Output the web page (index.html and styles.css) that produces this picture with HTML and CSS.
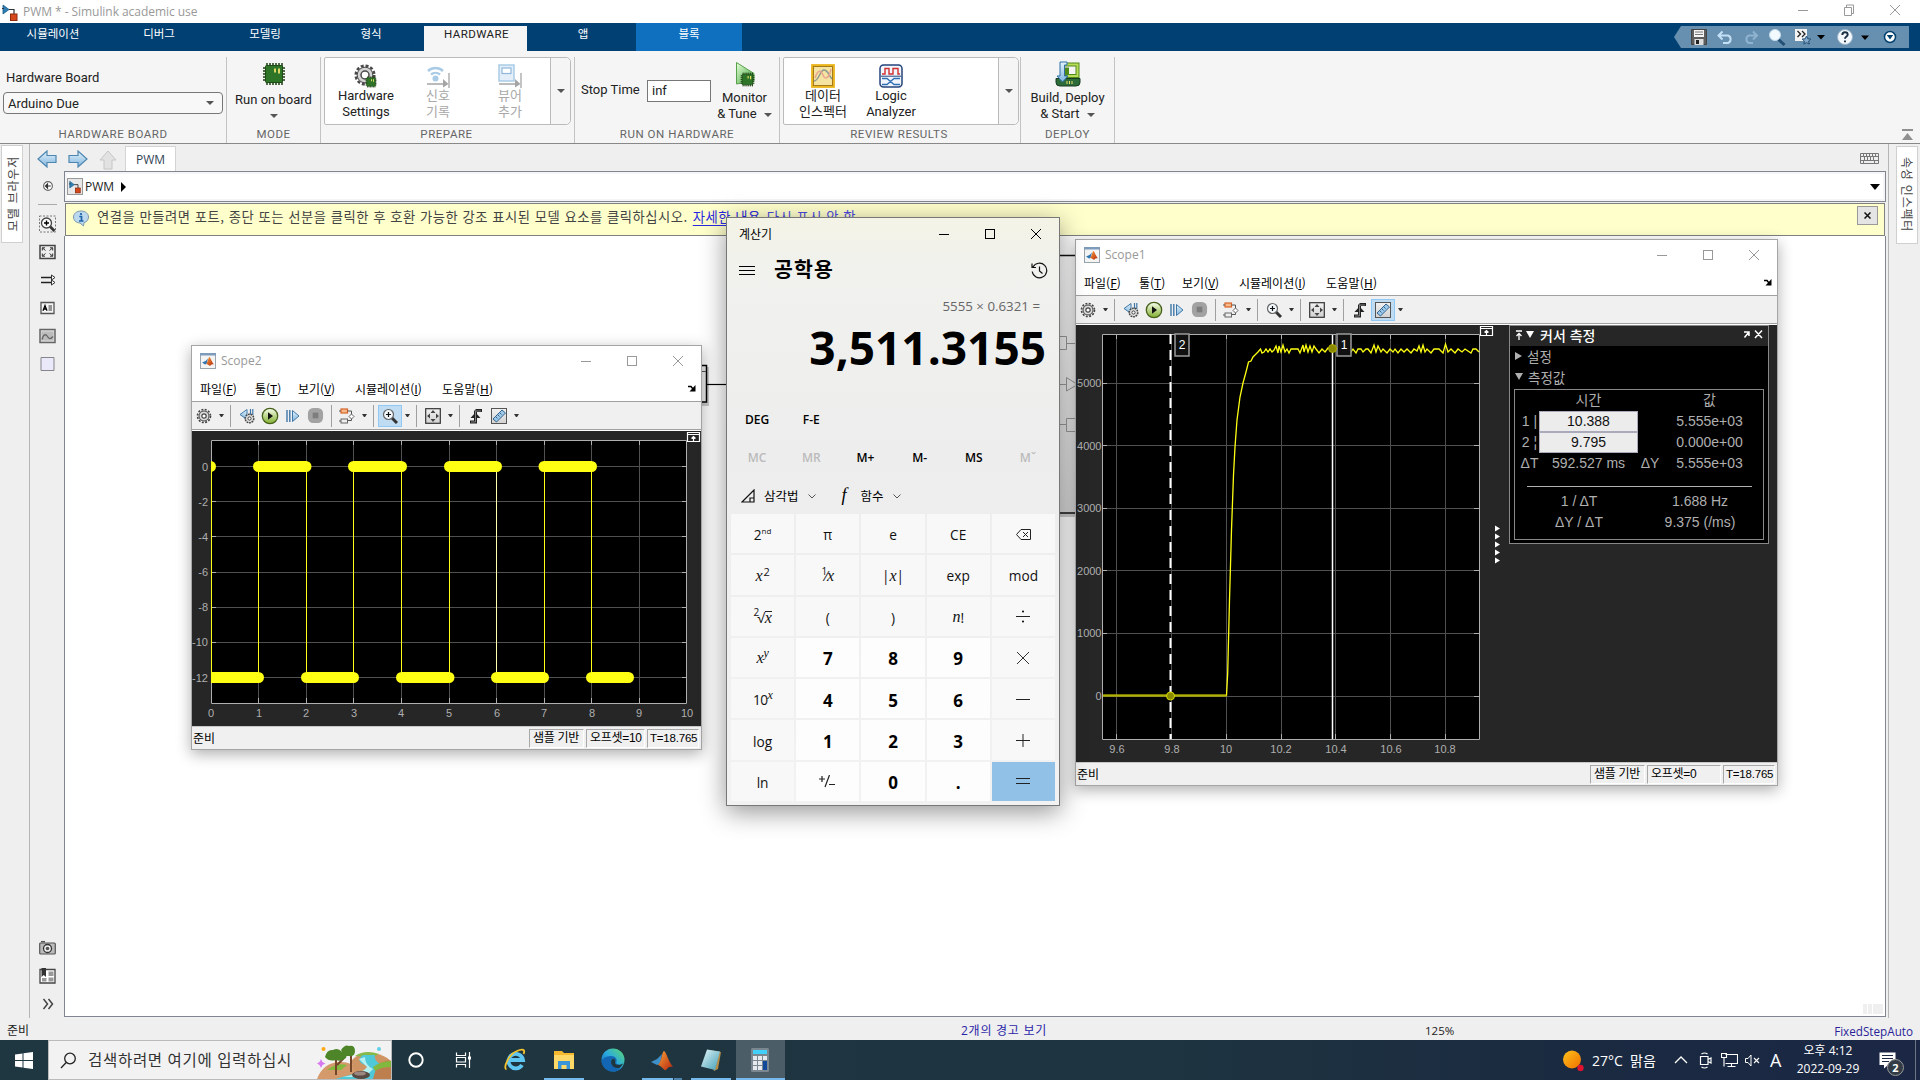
FILE: index.html
```html
<!DOCTYPE html>
<html lang="ko">
<head>
<meta charset="utf-8">
<title>PWM * - Simulink academic use</title>
<link rel="stylesheet" href="styles.css">
</head>
<body>
<svg class="sprite" width="0" height="0" aria-hidden="true">
  <defs>
    <linearGradient id="gBlue" x1="0" y1="0" x2="0" y2="1"><stop offset="0" stop-color="#e4f3fc"/><stop offset="1" stop-color="#7fb4dc"/></linearGradient>
    <linearGradient id="gGray" x1="0" y1="0" x2="0" y2="1"><stop offset="0" stop-color="#f2f2f2"/><stop offset="1" stop-color="#d2d2d2"/></linearGradient>
    <linearGradient id="gGreen" x1="0" y1="0" x2="0" y2="1"><stop offset="0" stop-color="#fafff0"/><stop offset="1" stop-color="#7fae2c"/></linearGradient>
    <linearGradient id="gLeaf" x1="0" y1="0" x2="1" y2="1"><stop offset="0" stop-color="#e4ffd8"/><stop offset="1" stop-color="#3fa33a"/></linearGradient>
    <linearGradient id="gSun" x1="0" y1="0" x2="1" y2="1"><stop offset="0" stop-color="#ffc21a"/><stop offset="1" stop-color="#f07000"/></linearGradient>
    <linearGradient id="gEdge" x1="0" y1="1" x2="1" y2="0"><stop offset="0" stop-color="#0c59a4"/><stop offset=".5" stop-color="#2aa8e0"/><stop offset="1" stop-color="#5fdc6c"/></linearGradient>
    <linearGradient id="gFire" x1="0" y1="0" x2="1" y2="1"><stop offset="0" stop-color="#f7a13a"/><stop offset="1" stop-color="#b5240c"/></linearGradient>
    <linearGradient id="gNote" x1="0" y1="0" x2="1" y2="1"><stop offset="0" stop-color="#e6f7fa"/><stop offset="1" stop-color="#3f9db5"/></linearGradient>
  </defs>
  <symbol id="i-model" viewBox="0 0 16 20"><path d="M1 3v9l6-4.500z" fill="#2d7fb5" stroke="#1a5a88" stroke-width=".8"/><path d="M0 6.500h2M7 7.500h5V12" fill="none" stroke="#333" stroke-width="1.200"/><rect x="8.500" y="12" width="6.500" height="6.500" fill="#d4481c" stroke="#8e2a0b"/></symbol>
  <symbol id="i-matlab" viewBox="0 0 16 16"><rect x=".5" y=".5" width="15" height="15" fill="#f4f4f4" stroke="#9aa4ad"/><rect x="0" y="0" width="16" height="2.500" fill="#7d9cbb"/><path d="M2 9.500l3.500-1.500L8 5.500 6.500 11 5 11.500z" fill="#2f77b5"/><path d="M6 11C8 9 8.500 4 9.300 4c1 0 2.500 5 4.700 7.500-1.500-.7-2.500-.3-3.500 1C9.500 13.500 8 11 6 11z" fill="url(#gFire)"/></symbol>
  <symbol id="i-chip" viewBox="0 0 24 24"><path d="M5 1v22M8 1v22M11 1v22M14 1v22M17 1v22M20 1v22M1 6h22M1 9h22M1 12h22M1 15h22M1 18h22" stroke="#1d3b12" stroke-width="1.500"/><rect x="3.500" y="3.500" width="17" height="17" rx="1" fill="#2f7527" stroke="#1d4c17"/><path d="M13 6.500v4M17 6.500v5" stroke="#efe36b" stroke-width="1.800"/></symbol>
  <symbol id="i-gear" viewBox="0 0 16 16"><circle cx="8" cy="8" r="6.500" fill="none" stroke="#444" stroke-width="1.600" stroke-dasharray="2 1.400"/><circle cx="8" cy="8" r="5" fill="#ddd" stroke="#444"/><circle cx="8" cy="8" r="2.200" fill="#fff" stroke="#444" stroke-width="1.200"/></symbol>
  <symbol id="i-signal" viewBox="0 0 24 24"><path d="M2 7a11 11 0 0 1 15 0M5 10.500a7 7 0 0 1 9 0" fill="none" stroke="#a9cbe6" stroke-width="2.400"/><circle cx="9.500" cy="14.500" r="3" fill="#a9cbe6"/><path d="M1 20h18M23 9v15" stroke="#a5a5a5" stroke-width="1.300"/><path d="M17 15l5.500 5-5.500 3.500z" fill="#a5a5a5"/></symbol>
  <symbol id="i-viewer" viewBox="0 0 24 24"><rect x="1" y="1" width="15" height="16" fill="#e4eef8" stroke="#a9cbe6" stroke-width="1.500"/><rect x="4" y="4" width="9" height="5.500" fill="#fff" stroke="#8fb8dc" stroke-width="1.200"/><path d="M1 20h18M23 9v15" stroke="#a5a5a5" stroke-width="1.300"/><path d="M17 15l5.500 5-5.500 3.500z" fill="#a5a5a5"/></symbol>
  <symbol id="i-step" viewBox="0 0 16 16"><path d="M2 2v12M4.800 2v12" stroke="#3f78a8" stroke-width="1.400"/><path d="M7.500 2.500v11L14 8z" fill="url(#gBlue)" stroke="#3f78a8"/></symbol>
  <symbol id="i-back" viewBox="0 0 16 16"><path d="M1 6.500L8 1.500v10z" fill="url(#gBlue)" stroke="#3f78a8"/><path d="M11.500 1v6M13.800 1v6" stroke="#3f78a8" stroke-width="1.200"/><circle cx="10.500" cy="10.500" r="4.300" fill="#ddd" stroke="#444" stroke-width="1.500" stroke-dasharray="1.800 .8"/><circle cx="10.500" cy="10.500" r="1.600" fill="#fff" stroke="#444"/></symbol>
  <symbol id="i-play" viewBox="0 0 18 18"><circle cx="9" cy="9" r="7.700" fill="url(#gGreen)" stroke="#47611d" stroke-width="1.300"/><path d="M7 5.300v7.400L12 9z" fill="#111"/></symbol>
  <symbol id="i-stop" viewBox="0 0 18 18"><rect x="1" y="1" width="16" height="16" rx="5.500" fill="#a2a2a2"/><rect x="6" y="6" width="6" height="6" fill="#7d7d7d"/></symbol>
  <symbol id="i-blocks" viewBox="0 0 16 16"><rect x="2" y="1" width="6.500" height="4" fill="#f6b98a" stroke="#d9642a" stroke-width="1.200"/><path d="M8.500 3h4V6M12.500 11v1.500H8.500" fill="none" stroke="#555"/><path d="M0 3h2M0 13h2" stroke="#555"/><path d="M12.500 6l2.500 2.500-2.500 2.500L10 8.500z" fill="#fff" stroke="#666"/><rect x="2" y="11" width="6.500" height="4" fill="#eee" stroke="#666"/></symbol>
  <symbol id="i-zoom" viewBox="0 0 16 16"><path d="M10 10l5 5" stroke="#333" stroke-width="3"/><circle cx="6.500" cy="6.500" r="5" fill="#f2f8fc" stroke="#666" stroke-width="1.200"/><path d="M4 6.500h5M6.500 4v5" stroke="#111" stroke-width="1.200"/></symbol>
  <symbol id="i-fit" viewBox="0 0 16 16"><rect x=".7" y=".7" width="14.600" height="14.600" fill="url(#gGray)" stroke="#333" stroke-width="1.200"/><path d="M8 2l2.500 3h-5zM8 14l2.500-3h-5zM2 8l3-2.500v5zM14 8l-3-2.500v5z" fill="#444"/></symbol>
  <symbol id="i-trigger" viewBox="0 0 16 16"><path d="M2 14h5.500V2.500M7.500 2.500H14" fill="none" stroke="#222" stroke-width="3"/><path d="M2.500 10L7.500 4.500l5 5.500z" fill="#222"/><path d="M3 14h4.500V3H13" fill="none" stroke="#999" stroke-width=".8"/></symbol>
  <symbol id="i-ruler" viewBox="0 0 16 16"><rect x=".5" y=".5" width="15" height="15" fill="url(#gGray)" stroke="#555"/><path d="M2 11L11 2l3.500 3L5.500 14z" fill="#9cc8ea" stroke="#34638c"/><path d="M5 9l1.500 1.500M7 7l1.500 1.500M9 5l1.500 1.500" stroke="#34638c"/></symbol>
  <symbol id="i-dock" viewBox="0 0 8 7"><path d="M0 1.500h3l2 2.500" fill="none" stroke="#000" stroke-width="1.500"/><path d="M7.500 0v6.500H1.500z" fill="#000"/></symbol>
  <symbol id="i-min" viewBox="0 0 12 12"><path d="M1 6.500h10" stroke="currentColor"/></symbol>
  <symbol id="i-max" viewBox="0 0 12 12"><rect x="1.500" y="1.500" width="9" height="9" fill="none" stroke="currentColor"/></symbol>
  <symbol id="i-close" viewBox="0 0 12 12"><path d="M1 1l10 10M11 1L1 11" stroke="currentColor"/></symbol>
  <symbol id="i-arrow" viewBox="0 0 20 18"><path d="M19 5.500v7H10V17L1 9l9-8v4.500z" fill="url(#gBlue)" stroke="#4d86b0" stroke-width="1.200"/></symbol>
</svg>

<div class="desktop">
  <header class="titlebar">
    <svg class="titlebar-icon" width="16" height="20"><use href="#i-model"/></svg>
    <span class="titlebar-text">PWM * - Simulink academic use</span>
    <div class="titlebar-buttons">
      <svg width="12" height="12"><use href="#i-min"/></svg>
      <svg width="12" height="12" viewBox="0 0 12 12"><path d="M1.500 3.500h7v8h-7zM3.500 3V1h7v8.500H9" fill="none" stroke="currentColor"/></svg>
      <svg width="12" height="12"><use href="#i-close"/></svg>
    </div>
  </header>

  <nav class="ribbon-tabs">
    <span class="rtab">시뮬레이션</span><span class="rtab">디버그</span><span class="rtab">모델링</span><span class="rtab">형식</span><span class="rtab rtab-active">HARDWARE</span><span class="rtab">앱</span><span class="rtab rtab-block">블록</span>
    <div class="quick">
      <svg width="235" height="22" viewBox="1674 26 235 22">
        <path d="M1681 26h228v22h-228l-7-11z" fill="#668fb0"/>
        <path d="M1691.500 29.500h15v15h-15z" fill="#5e5e5e" stroke="#444"/><path d="M1694 30h10v7h-10z" fill="#f4f4f4"/><path d="M1695 32h8M1695 34.500h8" stroke="#777"/><path d="M1694.500 39h9v6h-9z" fill="#ddd"/><path d="M1696 40h3v4h-3z" fill="#222"/>
        <path d="M1719 35.500h9a4 4 0 0 1 0 7.500h-5M1722.500 31.500l-4 4 4 4" fill="none" stroke="#c4e0f5" stroke-width="2"/>
        <path d="M1757 35.500h-8a4 4 0 0 0 0 7.500h4M1753 31.500l4 4-4 4" fill="none" stroke="#8fb3d0" stroke-width="2"/>
        <path d="M1778.500 39.500l6 5.500" stroke="#244f74" stroke-width="3"/><circle cx="1775" cy="35" r="5.500" fill="#f2fafe" stroke="#c4dced"/>
        <path d="M1795 29h12v12h-12z" fill="#f4f4f4"/><path d="M1797.500 31l3 3-3 3M1802 31l3 3-3 3" fill="none" stroke="#222" stroke-width="1.300"/><path d="M1806.500 36l1.300 2.800 3 .3-2.200 2 .7 3-2.800-1.500-2.700 1.500.6-3-2.200-2 3-.3z" fill="#86aacb" stroke="#244f74"/>
        <path d="M1817 35h8l-4 4.500zM1861 35.500h8l-4 4.500z" fill="#000"/>
        <circle cx="1845" cy="37" r="7.500" fill="#f4f8fb" stroke="#9ab6cc"/><path d="M1842.300 35q0-2.700 2.700-2.700t2.700 2.400c0 1.800-2.700 1.800-2.700 4M1845 40.500v1.800" fill="none" stroke="#1b2d40" stroke-width="1.900"/>
        <circle cx="1890" cy="37" r="5.500" fill="#fff" stroke="#00406f" stroke-width="1.500"/><path d="M1886.800 35h6.400l-3.200 4.500z" fill="#00406f"/>
      </svg>
    </div>
  </nav>

  <section class="ribbon">
    <div class="group g-board">
      <div class="group-body board-body"><label>Hardware Board</label><div class="select"><span>Arduino Due</span><i class="tri"></i></div></div>
      <div class="group-title">HARDWARE BOARD</div>
    </div>
    <div class="group g-mode">
      <div class="group-body"><div class="bigbtn"><svg width="24" height="24"><use href="#i-chip"/></svg><span>Run on board</span><i class="tri"></i></div></div>
      <div class="group-title">MODE</div>
    </div>
    <div class="group g-prepare">
      <div class="group-body"><div class="gallery">
        <div class="gitem"><svg width="24" height="24" viewBox="0 0 24 24"><circle cx="11" cy="11" r="9.300" fill="none" stroke="#4a4a4a" stroke-width="2.500" stroke-dasharray="3 1.900"/><circle cx="11" cy="11" r="7.800" fill="#d4d4d4" stroke="#4a4a4a"/><circle cx="11" cy="11" r="4" fill="#fff" stroke="#4a4a4a" stroke-width="1.500"/><svg x="11" y="12" width="12" height="12"><use href="#i-chip"/></svg></svg><span>Hardware<br>Settings</span></div>
        <div class="gitem gitem-off"><svg width="24" height="24"><use href="#i-signal"/></svg><span>신호<br>기록</span></div>
        <div class="gitem gitem-off"><svg width="24" height="24"><use href="#i-viewer"/></svg><span>뷰어<br>추가</span></div>
        <div class="gmore"><i class="tri"></i></div>
      </div></div>
      <div class="group-title">PREPARE</div>
    </div>
    <div class="group g-run">
      <div class="group-body run-body"><label>Stop Time</label><div class="input">inf</div>
        <div class="bigbtn tall"><svg width="24" height="26" viewBox="0 0 24 26"><path d="M3.500 1.500L21 12.500V20L3.500 23z" fill="url(#gLeaf)" stroke="#58a04c"/><svg x="7" y="11" width="15" height="15"><use href="#i-chip"/></svg></svg><span>Monitor<br>&amp; Tune <i class="tri"></i></span></div></div>
      <div class="group-title">RUN ON HARDWARE</div>
    </div>
    <div class="group g-review">
      <div class="group-body"><div class="gallery">
        <div class="gitem"><svg width="24" height="24" viewBox="0 0 24 24"><rect x="1.200" y="1.200" width="21.600" height="21.600" fill="#f5e3a2" stroke="#eab61e" stroke-width="2.200"/><rect x="2.500" y="2.500" width="19" height="19" fill="none" stroke="#a67a1a"/><path d="M3 17C8 17 9 6 13 6s5 6 8 9" fill="none" stroke="#8b9a8e" stroke-width="1.500"/><path d="M4 14c3-9 6-8 8-3s6 4 8-6" fill="none" stroke="#e8a690" stroke-width="1.500"/></svg><span>데이터<br>인스펙터</span></div>
        <div class="gitem"><svg width="24" height="24" viewBox="0 0 24 24"><rect x="1" y="1" width="22" height="22" rx="3.500" fill="#f2f6fc" stroke="#24447c" stroke-width="1.500"/><path d="M3 10h3V4.500h4V10h4V4.500h5V10h2" fill="none" stroke="#d03030" stroke-width="1.400"/><path d="M2 12.200h20" stroke="#24447c"/><path d="M3 14.500h5l7 6h6M3 20.500h5l7-6h6" fill="none" stroke="#2f6fb5" stroke-width="1.300"/></svg><span>Logic<br>Analyzer</span></div>
        <div class="gmore"><i class="tri"></i></div>
      </div></div>
      <div class="group-title">REVIEW RESULTS</div>
    </div>
    <div class="group g-deploy">
      <div class="group-body"><div class="bigbtn tall"><svg width="26" height="26" viewBox="0 0 26 26"><path d="M1 17.500h24v4q0 3.500-4 3.500H5q-4 0-4-3.500z" fill="#2e6b3a" stroke="#173d20"/><path d="M12 20v3M14.500 20v3M17 20v3" stroke="#efe36b"/><path d="M10 3.500h12.500V15H12V6.500" fill="none" stroke="#4f8a18" stroke-width="4"/><path d="M10 3.500h12.500V15H12" fill="none" stroke="#b9dc58" stroke-width="2"/><path d="M5 1h7v3H9.500v11H13l-5.500 6L2 15h3z" fill="url(#gBlue)" stroke="#2f6fa5"/></svg><span>Build, Deploy<br>&amp; Start <i class="tri"></i></span></div></div>
      <div class="group-title">DEPLOY</div>
    </div>
    <svg class="ribbon-collapse" width="12" height="12" viewBox="0 0 12 12"><path d="M0 0h11v2H0zM5.500 4L11 11H0z" fill="#909090"/></svg>
  </section>

  <main class="workspace">
    <aside class="dock dock-left"><div class="vtab vtab-up"><span>모델 브라우저</span></div></aside>
    <div class="editor">
      <div class="docbar">
        <svg class="nav-arrow" width="20" height="18"><use href="#i-arrow"/></svg>
        <svg class="nav-arrow nav-fwd" width="20" height="18"><use href="#i-arrow"/></svg>
        <svg class="nav-arrow" width="18" height="20" viewBox="0 0 18 20"><path d="M9 1l8 9h-4v9H5v-9H1z" fill="#e2e2e2" stroke="#c6c6c6"/></svg>
        <div class="doctab">PWM</div>
        <svg class="kbd" width="19" height="12" viewBox="0 0 19 12"><path d="M.5.5h18v10H.5zM1 3.500h17M1 7.500h17M3.500 1v2M6.500 1v2M9.500 1v2M12.500 1v2M15.500 1v2M4.500 4v3M7.500 4v3M10.500 4v3M13.500 4v3M3.500 8v2M14.500 8v2" fill="none" stroke="#777"/></svg>
      </div>
      <div class="editor-row">
        <div class="palette">
          <svg width="20" height="30" viewBox="0 0 20 30"><circle cx="10" cy="15" r="4.700" fill="#fff" stroke="#666" stroke-width="1.200"/><path d="M7 15h6M9.500 12.800L7.300 15l2.200 2.200z" stroke="#333" stroke-width="1.200" fill="#333"/></svg>
          <i class="palette-line"></i>
          <svg width="17" height="17" viewBox="0 0 17 17"><path d="M.5.500h16v16H.5z" fill="none" stroke="#777" stroke-dasharray="2 1.500"/><path d="M11 11l4.500 4.500" stroke="#333" stroke-width="2.600"/><circle cx="7.500" cy="7.500" r="5" fill="#fff" stroke="#444" stroke-width="1.300"/><path d="M5 7.500h5M7.500 5v5" stroke="#000" stroke-width="1.400"/></svg>
          <svg width="17" height="15" viewBox="0 0 17 15"><path d="M1 1h15v13H1z" fill="#eee" stroke="#444" stroke-width="1.500"/><path d="M6.500 6L3.500 3.500M3.300 6V3.300H6M10.500 6l3-2.500M11 3.300h2.700V6M6.500 9l-3 2.500M3.300 9v2.700H6M10.500 9l3 2.500M11 11.700h2.700V9" stroke="#333" fill="none"/></svg>
          <svg width="16" height="12" viewBox="0 0 16 12"><path d="M1 3.500h11M1 8.500h11" stroke="#222" stroke-width="1.300"/><path d="M11.500 1l3.500 2.500L11.500 6zM11.500 6l3.500 2.500-3.500 2.500z" fill="#fff" stroke="#333"/></svg>
          <svg width="15" height="13" viewBox="0 0 15 13"><path d="M1 1h13v11H1z" fill="#f6f6f6" stroke="#555" stroke-width="1.300"/><path d="M3 9.200L5 4l2 5.200M3.600 7.500h2.800" fill="none" stroke="#000" stroke-width="1.300"/><path d="M8.500 4.500H12M8.500 6.500H12M8.500 8.500H12" stroke="#333"/></svg>
          <svg width="17" height="15" viewBox="0 0 17 15"><path d="M1 1h15v13H1z" fill="#ddd" stroke="#666" stroke-width="1.500"/><path d="M2.500 3h12v9h-12z" fill="#bbb"/><path d="M3 11c1.500-6 4-5.500 5.500-3s3 3 5.500 0" fill="none" stroke="#666" stroke-width="1.300"/></svg>
          <svg width="15" height="15" viewBox="0 0 15 15"><path d="M1 1h13v13H1z" fill="#e9e9f9" stroke="#85858b"/></svg>
          <div class="palette-gap"></div>
          <svg width="17" height="14" viewBox="0 0 17 14"><rect x=".7" y="2" width="15.600" height="11" rx="1" fill="#bbb" stroke="#555" stroke-width="1.200"/><path d="M2 .7h4" stroke="#555" stroke-width="1.500"/><circle cx="8.500" cy="7.500" r="4" fill="#eee" stroke="#333" stroke-width="1.300"/><circle cx="8.500" cy="7.500" r="1.800" fill="#555"/></svg>
          <svg width="17" height="16" viewBox="0 0 17 16"><path d="M1 1.500h15v13.500H1z" fill="#fff" stroke="#444" stroke-width="1.300"/><path d="M9.500 3.500h5v4.500h-5zM9.500 9.500h5v4h-5zM3 10h4.500v3.500H3z" fill="#999"/><path d="M2.500 0h4.500v9L4.700 7 2.500 9z" fill="#333"/></svg>
          <svg width="12" height="12" viewBox="0 0 12 12"><path d="M1.500 1l4 5-4 5M6.500 1l4 5-4 5" fill="none" stroke="#444" stroke-width="1.500"/></svg>
        </div>
        <div class="editor-main">
          <div class="pathbar"><svg class="path-icon" width="16" height="17"><use href="#i-model"/></svg><span>PWM</span><i class="path-sep"></i><i class="path-drop"></i></div>
          <div class="notice">
            <svg width="18" height="17" viewBox="0 0 18 17"><path d="M9 1c4.500 0 7.500 2.700 7.500 6 0 3-2 5-4.500 5.700L11.500 16 8 13C3.800 12.700 1.500 10.200 1.500 7 1.500 3.700 4.500 1 9 1z" fill="#bcd8ee" stroke="#7d97ab"/><path d="M9 3v2M7.300 6.500H9.500V11M7 11h4.500" stroke="#1d63a8" stroke-width="1.700" fill="none"/></svg>
            <span class="notice-text">연결을 만들려면 포트, 종단 또는 선분을 클릭한 후 호환 가능한 강조 표시된 모델 요소를 클릭하십시오.</span>
            <span class="notice-link">자세한 내용</span><span class="notice-link2">다시 표시 안 함</span>
            <b class="notice-x"><svg width="7" height="7" viewBox="0 0 7 7"><path d="M.5.500l6 6M6.500.500l-6 6" stroke="#111" stroke-width="1.500"/></svg></b>
          </div>
          <div class="canvas"><div class="canvas-marks"><i></i><i></i><i class="wide"></i></div></div>
        </div>
      </div>
    </div>
    <aside class="dock dock-right"><div class="vtab"><span>속성 인스펙터</span></div></aside>
  </main>

  <footer class="statusbar"><span>준비</span><span class="s-warn">2개의 경고 보기</span><span class="s-zoom">125%</span><span class="s-solver">FixedStepAuto</span></footer>

  <footer class="taskbar">
    <div class="start"><svg width="18" height="17" viewBox="0 0 18 17"><path d="M0 2.500l7.500-1V8H0zM8.500 1.300L18 0v8H8.500zM0 9h7.500v6.500l-7.500-1zM8.500 9H18v8l-9.500-1.300z" fill="#fff"/></svg></div>
    <div class="search">
      <svg class="search-icon" width="17" height="17" viewBox="0 0 17 17"><circle cx="10" cy="6.500" r="5.300" fill="none" stroke="#222" stroke-width="1.300"/><path d="M6.200 10.500L1 16" stroke="#222" stroke-width="1.300"/></svg>
      <span>검색하려면 여기에 입력하십시</span>
      <svg class="scene" width="74" height="34" viewBox="0 0 74 34"><path d="M0 34Q6 18 22 17q12-1 20 8V34z" fill="#d59a6b"/><path d="M34 16q8-10 22-8 12 2 18 8v12H38z" fill="#cf9463"/><path d="M38 11q10-7 24-2l-8 4q-8-2-16-2z" fill="#87b84a"/><path d="M46 10q-8 6 2 10 8 4-8 8l-22 6h40q10-6 6-14-8-6-6-10z" fill="#4fc8d8"/><path d="M48 12q0 8 8 12l-8 8H26q20-4 24-10-4-4-8-8z" fill="#b5f0f0"/><path d="M60 20q10-6 14-4v18H56z" fill="#bd7f4e"/><path d="M56 22q8-6 18-6v6q-10 0-16 4zM10 25q10-8 20-5l-6 5z" fill="#83b83f"/><path d="M19 30V13M20 20l7-7M34 27V10" stroke="#74462a" stroke-width="2" fill="none"/><path d="M8 12q2-8 8-7 5-3 9 2 6 0 4 6-5 4-10 2-7 2-11-3zM24 5q4-6 8-4 6-1 6 5 0 6-6 5-6 0-8-6z" fill="#4d8528"/><ellipse cx="44" cy="30" rx="9" ry="4" fill="#584943"/><ellipse cx="43" cy="28.500" rx="6" ry="2" fill="#9a8880"/><circle cx="6.500" cy="4" r="2" fill="#ffa812"/><circle cx="62" cy="4" r="2" fill="#5fd0e8"/><path d="M4 14l1.500 3 3 1.500-3 1.500L4 23l-1.500-3L0 18.500 2.500 17z" fill="#d77af0"/></svg>
    </div>
    <div class="tasks">
      <div class="task t-cort"><svg width="18" height="18" viewBox="0 0 18 18"><circle cx="9" cy="9" r="6.700" fill="none" stroke="#fff" stroke-width="1.900"/></svg></div>
      <div class="task t-view"><svg width="18" height="18" viewBox="0 0 18 18"><path d="M2.500 1.500v3h9v-3M2.500 16.500v-3h9v3M2.500 6.500h9v4.500h-9zM15.500 1v16" fill="none" stroke="#fff" stroke-width="1.200"/><path d="M14 5.500h3v3h-3z" fill="#fff"/></svg></div>
      <div class="task"><svg width="24" height="24" viewBox="0 0 24 24"><path d="M19 17a7.300 7.300 0 1 1 1-5H6" fill="none" stroke="#5fc6f2" stroke-width="3.800"/><path d="M3.500 21.500C-.5 20 6 6 14 3c6-3 8.500-1 6.500 3" fill="none" stroke="#f4c22c" stroke-width="1.800"/></svg></div>
      <div class="task run"><svg width="22" height="20" viewBox="0 0 22 20"><path d="M1 1h8l2 2h10v16H1z" fill="#f5b82e"/><path d="M1 5h20v14H1z" fill="#ffd867"/><path d="M5 11h12v8h-3.500v-4h-5v4H5z" fill="#3a95d8"/></svg></div>
      <div class="task"><svg width="24" height="24" viewBox="0 0 24 24"><circle cx="12" cy="12" r="11.500" fill="url(#gEdge)"/><path d="M23 14c-2 3-7 3-8 1 2-4-1-7-5-7C5 8 1 11 .5 13.500 1.500 20 7 23.500 12 23.500c4 0 6-1.500 8-3.500-5 1.500-10-1-10-6 0-2 1-3 2-3.500 2 .5 3 2 2 4.500 1 2.500 6 2.500 9-1z" fill="#1266b4"/><path d="M10 14c0-2 1-3 2-3.500 2 .5 3 2 2 4.500.7 2 4.500 2.700 8 .5-1 2-2 3.500-3.500 4.500C14 21 10 18 10 14z" fill="#1f3640"/></svg></div>
      <div class="task run multi"><svg width="24" height="22" viewBox="0 0 24 22"><path d="M1 13l6-3 5-5-2 10-3 1z" fill="#3f8fc8"/><path d="M8 16c4-4 4-14 6-14s4 10 9 16c-3-1-5 0-7 3-2 1-4-4-8-5z" fill="url(#gFire)"/></svg></div>
      <div class="task run"><svg width="24" height="24" viewBox="0 0 24 24"><path d="M9 2l13 2-3 17-4 2z" fill="#b58b4a"/><path d="M8 1.500l13 2L16 22 2 18.500z" fill="url(#gNote)"/></svg></div>
      <div class="task run active"><svg width="18" height="24" viewBox="0 0 18 24"><rect width="18" height="24" rx="1.500" fill="#7b8790"/><path d="M2 2h14v4H2z" fill="#42d0fa"/><path d="M2 8h4v4H2zM7 8h4v4H7zM12 8h4v4h-4zM2 13h4v4H2zM7 13h4v4H7zM2 18h4v4H2zM7 18h4v4H7z" fill="#e6eaee"/><path d="M12 13h4v9h-4z" fill="#10489a"/></svg></div>
    </div>
    <div class="tray">
      <svg width="22" height="22" viewBox="0 0 22 22"><circle cx="10" cy="10.500" r="9" fill="url(#gSun)"/><circle cx="18.500" cy="19" r="3.200" fill="#e0122f"/></svg>
      <span class="weather">27°C&nbsp; 맑음</span>
      <svg class="t-chev" width="14" height="8" viewBox="0 0 14 8"><path d="M1 7l6-6 6 6" fill="none" stroke="#fff" stroke-width="1.300"/></svg>
      <svg class="t-meet" width="13" height="17" viewBox="0 0 13 17"><path d="M1.500 4.500h7.500v8H1.500zM9 7.500l3-1.500v5l-3-1.500M2.500 2q3-2 6 0M2.500 15q3 2 6 0" fill="none" stroke="#fff" stroke-width="1.200"/></svg>
      <svg class="t-net" width="17" height="15" viewBox="0 0 17 15"><path d="M4.500 1.500h12v9h-12M10.500 10.500v3M6.500 13.500h8M.5.500h5v4h-5zM3 4.500v9" fill="none" stroke="#fff" stroke-width="1.100"/></svg>
      <svg class="t-vol" width="15" height="13" viewBox="0 0 15 13"><path d="M.5 4.500H3l3-3.500v11l-3-3.500H.500z" fill="none" stroke="#fff"/><path d="M9 4l5 5M14 4L9 9" stroke="#fff" stroke-width="1.100"/></svg>
      <span class="t-lang">A</span>
      <span class="clock">오후 4:12<br>2022-09-29</span>
      <div class="notif"><svg width="17" height="17" viewBox="0 0 17 17"><path d="M.5.500h16v12.500H9L5 16.500V13H.5z" fill="#fff"/><path d="M3 3.500h11M3 6.500h11M3 9.500h7" stroke="#1c2944"/></svg><b>2</b></div>
      <i class="peek"></i>
    </div>
  </footer>

  <svg class="blocks" width="420" height="290" viewBox="680 240 420 290">
    <defs><linearGradient id="gBlk" x1="0" y1="0" x2="0" y2="1"><stop offset="0" stop-color="#fff"/><stop offset="1" stop-color="#d8d8d8"/></linearGradient></defs>
    <path d="M684 367h25v39h-25zM904 258h200v259H904z" fill="#999" opacity=".5"/>
    <path d="M680.500 365.500h26V402h-26z" fill="#f0f0f0" stroke="#000" stroke-width="1.500"/><path d="M690 371.500h16" stroke="#555"/>
    <path d="M900 255.500h200V513H900z" fill="url(#gBlk)" stroke="#111" stroke-width="1.500"/>
    <path d="M706 384.500h30" stroke="#000" stroke-width="1.200"/>
    <g fill="none" stroke="#999"><path d="M1050.500 336.500h16v13h-16zM1066.500 343.500h20M1050 384.500h16M1066.500 377.500l11 7-11 6.500zM1050 424.500h16M1066.500 418.500h14v13h-14z"/></g>
  </svg>

  <section class="window scope scope2">
    <div class="w-title"><svg width="16" height="16"><use href="#i-matlab"/></svg><span>Scope2</span>
      <div class="w-buttons"><svg width="12" height="12"><use href="#i-min"/></svg><svg width="12" height="12"><use href="#i-max"/></svg><svg width="12" height="12"><use href="#i-close"/></svg></div></div>
    <div class="w-menu"><span>파일(<u>F</u>)</span><span>툴(<u>T</u>)</span><span>보기(<u>V</u>)</span><span>시뮬레이션(<u>I</u>)</span><span>도움말(<u>H</u>)</span><svg width="8" height="7"><use href="#i-dock"/></svg></div>
    <div class="w-tools">
      <b class="w24"><svg width="16" height="16"><use href="#i-gear"/></svg></b><em></em><i></i>
      <b><svg width="16" height="16"><use href="#i-back"/></svg></b><b><svg width="18" height="18"><use href="#i-play"/></svg></b><b><svg width="16" height="16"><use href="#i-step"/></svg></b><b><svg width="17" height="17"><use href="#i-stop"/></svg></b><i class="w8"></i>
      <b class="w24"><svg width="16" height="16"><use href="#i-blocks"/></svg></b><em></em><i></i>
      <b class="w24 on"><svg width="16" height="16"><use href="#i-zoom"/></svg></b><em></em><i></i>
      <b class="w24"><svg width="16" height="16"><use href="#i-fit"/></svg></b><em></em><i></i>
      <b><svg width="16" height="16"><use href="#i-trigger"/></svg></b><b class="w24"><svg width="16" height="16"><use href="#i-ruler"/></svg></b><em></em>
    </div>
    <div class="w-plot">
      <svg id="plot2" width="510" height="294" viewBox="192 431 510 294">
        <path d="M211 440h476v264H211z" fill="#000"/>
        <path d="M258.500 440v263M306.500 440v263M353.500 440v263M401.500 440v263M449.500 440v263M496.500 440v263M544.500 440v263M591.500 440v263M639.500 440v263M211 466.500h476M211 501.500h476M211 536.500h476M211 572.500h476M211 607.500h476M211 642.500h476M211 677.500h476" stroke="#505050"/>
        <path d="M211.500 440.500h475v263h-475z" fill="none" stroke="#afafaf"/>
        <path d="M258.500 440v5M306.500 440v5M353.500 440v5M401.500 440v5M449.500 440v5M496.500 440v5M544.500 440v5M591.500 440v5M639.500 440v5M258.500 703v-5M306.500 703v-5M353.500 703v-5M401.500 703v-5M449.500 703v-5M496.500 703v-5M544.500 703v-5M591.500 703v-5M639.500 703v-5M211 501.500h5M211 536.500h5M211 572.500h5M211 607.500h5M211 642.500h5M687 466.500h-5M687 501.500h-5M687 536.500h-5M687 572.500h-5M687 607.500h-5M687 642.500h-5M687 677.500h-5" stroke="#afafaf"/>
        <path d="M211.500 466v211M258.500 466v211M306.500 466v211M353.500 466v211M401.500 466v211M449.500 466v211M544.500 466v211M591.500 466v211" stroke="#ffff13"/><path d="M496.500 466v211" stroke="#ffffb0"/>
        <svg x="211" y="440" width="476" height="264" viewBox="211 440 476 264"><path d="M205 466.500h5.500M258.500 466.500h47.500M353.500 466.500h48M449.500 466.500h47M544 466.500h47.500M205 677.500h53.500M306.500 677.500h47M401.500 677.500h47.500M496.500 677.500h47M591.500 677.500h37" stroke="#ffff13" stroke-width="11" stroke-linecap="round"/></svg>
        <g class="axis"><text x="208" y="470.500" text-anchor="end">0</text><text x="208" y="505.500" text-anchor="end">-2</text><text x="208" y="540.500" text-anchor="end">-4</text><text x="208" y="576" text-anchor="end">-6</text><text x="208" y="611" text-anchor="end">-8</text><text x="208" y="646" text-anchor="end">-10</text><text x="208" y="682" text-anchor="end">-12</text>
        <g text-anchor="middle"><text x="211" y="717">0</text><text x="259" y="717">1</text><text x="306" y="717">2</text><text x="354" y="717">3</text><text x="401" y="717">4</text><text x="449" y="717">5</text><text x="497" y="717">6</text><text x="544" y="717">7</text><text x="592" y="717">8</text><text x="639" y="717">9</text><text x="687" y="717">10</text></g></g>
        <path d="M687.500 432.500h12v9h-12zM688 434.500h11M693.500 441v-4M691.500 438.500l2-2 2 2" fill="none" stroke="#fff" stroke-width="1.200"/>
      </svg>
    </div>
    <div class="w-status"><span class="ready">준비</span><span class="cell c1">샘플 기반</span><span class="cell c2">오프셋=10</span><span class="cell c3">T=18.765</span></div>
  </section>

  <section class="window scope scope1">
    <div class="w-title"><svg width="16" height="16"><use href="#i-matlab"/></svg><span>Scope1</span>
      <div class="w-buttons"><svg width="12" height="12"><use href="#i-min"/></svg><svg width="12" height="12"><use href="#i-max"/></svg><svg width="12" height="12"><use href="#i-close"/></svg></div></div>
    <div class="w-menu"><span>파일(<u>F</u>)</span><span>툴(<u>T</u>)</span><span>보기(<u>V</u>)</span><span>시뮬레이션(<u>I</u>)</span><span>도움말(<u>H</u>)</span><svg width="8" height="7"><use href="#i-dock"/></svg></div>
    <div class="w-tools">
      <b class="w24"><svg width="16" height="16"><use href="#i-gear"/></svg></b><em></em><i></i>
      <b><svg width="16" height="16"><use href="#i-back"/></svg></b><b><svg width="18" height="18"><use href="#i-play"/></svg></b><b><svg width="16" height="16"><use href="#i-step"/></svg></b><b><svg width="17" height="17"><use href="#i-stop"/></svg></b><i class="w8"></i>
      <b class="w24"><svg width="16" height="16"><use href="#i-blocks"/></svg></b><em></em><i></i>
      <b class="w24"><svg width="16" height="16"><use href="#i-zoom"/></svg></b><em></em><i></i>
      <b class="w24"><svg width="16" height="16"><use href="#i-fit"/></svg></b><em></em><i></i>
      <b><svg width="16" height="16"><use href="#i-trigger"/></svg></b><b class="w24 on"><svg width="16" height="16"><use href="#i-ruler"/></svg></b><em></em>
    </div>
    <div class="w-plot">
      <svg id="plot1" width="433" height="436" viewBox="1076 325 433 436">
        <path d="M1102 334h378v406h-378z" fill="#000"/>
        <path d="M1116.500 335v404M1171.500 335v404M1226.500 335v404M1281.500 335v404M1335.500 335v404M1390.500 335v404M1445.500 335v404M1102 383.500h377M1102 445.500h377M1102 508.500h377M1102 570.500h377M1102 633.500h377M1102 696.500h377" stroke="#505050"/>
        <path d="M1102.500 334.500h377v405h-377z" fill="none" stroke="#afafaf"/>
        <path d="M1116.500 334v5M1226.500 334v5M1281.500 334v5M1390.500 334v5M1445.500 334v5M1116.500 739v-5M1171.500 739v-5M1226.500 739v-5M1281.500 739v-5M1335.500 739v-5M1390.500 739v-5M1445.500 739v-5M1102 383.500h5M1102 445.500h5M1102 508.500h5M1102 570.500h5M1102 633.500h5M1479 383.500h-5M1479 445.500h-5M1479 508.500h-5M1479 570.500h-5M1479 633.500h-5M1479 696.500h-5" stroke="#afafaf"/>
        <polyline points="1103,695.5 1226.500,695.5 1227.700,673 1229.500,600 1231.500,530 1233.500,475 1235,447 1237,420 1240,397 1243,383 1246,372 1248.500,362 1251,361 1253,357 1256,354 1258,352 1260.500,349 1262,353 1264,352 1266,349 1268,352 1270,349 1272,352 1274,350 1276,346 1278,353 1279,346 1281,352 1283,345 1285,352 1287,349 1289,353 1291,349 1298,349 1300,353 1303,345 1304,352 1306,345 1308,352 1310,346 1312,352 1314,346 1316,349 1319,353 1322,349 1325,352 1328,348 1332,348 1351,352 1353,349 1356,353 1358,349 1361,349 1363,352 1366,349 1368,349 1371,353 1374,345 1376,352 1378,346 1381,352 1383,349 1387,353 1390,349 1393,352 1395,349 1398,353 1401,349 1404,352 1407,349 1411,353 1414,349 1417,351 1419,346 1421,352 1423,345 1425,352 1427,349 1431,353 1434,349 1439,349 1443,353 1445.500,344 1448,352 1451,349 1455,353 1458,349 1462,352 1465,349 1471,353 1473,349 1476,349 1479,352" fill="none" stroke="#ffff13" stroke-width="1.300"/>
        <path d="M1103 695.500h123.500" stroke="#b0b000" stroke-width="2"/>
        <path d="M1170.500 334v405" stroke="#fff" stroke-width="2" stroke-dasharray="10 6"/><path d="M1332.500 335v404" stroke="#fff" stroke-width="1.500"/>
        <path d="M1175 334h14v22h-14zM1337 334h14v22h-14z" fill="#111" stroke="#9a9a9a" stroke-width="1.500"/>
        <g class="cursor"><text x="1182" y="349">2</text><text x="1344" y="349">1</text></g>
        <circle cx="1332.500" cy="348.500" r="4" fill="#8a8a00" stroke="#a9a900"/><circle cx="1170.500" cy="696" r="4" fill="#8a8a00" stroke="#d8d800"/>
        <g class="axis"><g text-anchor="end"><text x="1101.500" y="387">5000</text><text x="1101.500" y="449.500">4000</text><text x="1101.500" y="512">3000</text><text x="1101.500" y="574.500">2000</text><text x="1101.500" y="637">1000</text><text x="1101.500" y="700">0</text></g>
        <g text-anchor="middle"><text x="1117" y="753">9.6</text><text x="1172" y="753">9.8</text><text x="1226" y="753">10</text><text x="1281" y="753">10.2</text><text x="1336" y="753">10.4</text><text x="1391" y="753">10.6</text><text x="1445" y="753">10.8</text></g></g>
        <path d="M1480.500 326.500h12v9h-12zM1481 328.500h11M1486.500 335v-4M1484.500 332.500l2-2 2 2" fill="none" stroke="#fff" stroke-width="1.200"/>
        <path d="M1495 525.500l5 3-5 3zM1495 533.500l5 3-5 3zM1495 541.500l5 3-5 3zM1495 549.500l5 3-5 3zM1495 557.500l5 3-5 3z" fill="#fff"/>
      </svg>
      <div class="measure">
        <div class="m-head"><svg width="8" height="12" viewBox="0 0 8 12"><path d="M1 2h6M4 4v7M1.500 7L4 4.500 6.500 7" fill="none" stroke="#fff" stroke-width="1.300"/></svg><i class="down"></i><b>커서 측정</b><svg class="m-x" width="20" height="9" viewBox="0 0 20 9"><path d="M1 2h5v4M5.500 2.500L1.500 7.500M12 .5l7 7.500M19 .5L12 8" fill="none" stroke="#fff" stroke-width="1.500"/></svg></div>
        <div class="m-row"><i class="right"></i>설정</div>
        <div class="m-row"><i class="down"></i>측정값</div>
        <div class="m-box">
          <span></span><span class="ko">시간</span><span></span><span class="ko">값</span>
          <span>1 |</span><span class="field">10.388</span><span></span><span>5.555e+03</span>
          <span>2 ¦</span><span class="field">9.795</span><span></span><span>0.000e+00</span>
          <span>ΔT</span><span>592.527 ms</span><span>ΔY</span><span>5.555e+03</span>
          <hr>
          <div class="m-sum"><span>1 / ΔT</span><span>1.688 Hz</span><span>ΔY / ΔT</span><span>9.375 (/ms)</span></div>
        </div>
      </div>
    </div>
    <div class="w-status"><span class="ready">준비</span><span class="cell c1">샘플 기반</span><span class="cell c2">오프셋=0</span><span class="cell c3">T=18.765</span></div>
  </section>

  <section class="window calc">
    <div class="c-title"><span>계산기</span><div class="w-buttons"><svg width="12" height="12"><use href="#i-min"/></svg><svg width="12" height="12"><use href="#i-max"/></svg><svg width="12" height="12"><use href="#i-close"/></svg></div></div>
    <div class="c-mode"><svg width="16" height="11" viewBox="0 0 16 11"><path d="M0 1.500h16M0 5.500h16M0 9.500h16" stroke="#000"/></svg><b>공학용</b><svg class="c-hist" width="17" height="17" viewBox="0 0 17 17"><path d="M2 5A7.300 7.300 0 1 1 1.200 9.500M1 1.500V5.500H5M8.500 4.500V9l3 2.500" fill="none" stroke="#111" stroke-width="1.200"/></svg></div>
    <div class="c-expr">5555 × 0.6321 =</div>
    <div class="c-result">3,511.3155</div>
    <div class="c-row6 c-deg"><span>DEG</span><span>F-E</span></div>
    <div class="c-row6 c-mem"><span class="off">MC</span><span class="off">MR</span><span>M+</span><span>M-</span><span>MS</span><span class="off">Mˇ</span></div>
    <div class="c-func"><svg width="14" height="14" viewBox="0 0 14 14"><path d="M1 13L13 1v12zM9 13V9h4" fill="none" stroke="#111" stroke-width="1.200"/></svg><span>삼각법</span><svg class="chev" width="8" height="5" viewBox="0 0 8 5"><path d="M.5.500L4 4 7.500.500" fill="none" stroke="#555"/></svg><i class="fx">f</i><span>함수</span><svg class="chev" width="8" height="5" viewBox="0 0 8 5"><path d="M.5.500L4 4 7.500.500" fill="none" stroke="#555"/></svg></div>
    <div class="keys">
      <span>2<sup class="nd">nd</sup></span><span>π</span><span>e</span><span>CE</span><span><svg width="15" height="11" viewBox="0 0 15 11"><path d="M5 .5h9.500v10H5l-4.500-5zM7 3l5 5M12 3L7 8" fill="none" stroke="#222"/></svg></span>
      <span><i>x</i><sup class="sq">2</sup></span><span><sup class="one">1</sup>⁄<i>x</i></span><span>|<i>x</i>|</span><span>exp</span><span>mod</span>
      <span><sup class="root">2</sup>√<i class="over">x</i></span><span>(</span><span>)</span><span><i>n</i>!</span><span><svg width="14" height="14" viewBox="0 0 14 14"><path d="M0 6.500h14" stroke="#222"/><circle cx="7" cy="1.500" r="1"/><circle cx="7" cy="11.500" r="1"/></svg></span>
      <span><i>x<sup class="pow">y</sup></i></span><span class="num">7</span><span class="num">8</span><span class="num">9</span><span><svg width="14" height="14" viewBox="0 0 14 14"><path d="M1 1l12 12M13 1L1 13" stroke="#333"/></svg></span>
      <span class="ten">10<sup><i>x</i></sup></span><span class="num">4</span><span class="num">5</span><span class="num">6</span><span><svg width="14" height="14" viewBox="0 0 14 14"><path d="M0 6.500h14" stroke="#222"/></svg></span>
      <span>log</span><span class="num">1</span><span class="num">2</span><span class="num">3</span><span><svg width="14" height="14" viewBox="0 0 14 14"><path d="M0 6.500h14M7 0v13" stroke="#222"/></svg></span>
      <span>ln</span><span class="num pm"><svg width="17" height="13" viewBox="0 0 17 13"><path d="M0 4h6M3 1v6M10.500 0L6 12M10 9.500h6" fill="none" stroke="#222" stroke-width="1.200"/></svg></span><span class="num">0</span><span class="num">.</span><span class="eq"><svg width="14" height="10" viewBox="0 0 14 10"><path d="M0 1.500h14M0 6.500h14" stroke="#222"/></svg></span>
    </div>
  </section>
</div>
</body>
</html>
```
FILE: styles.css
```css
* { box-sizing: border-box; }
body { margin: 0; font-family: "Open Sans", "Noto Sans CJK KR", sans-serif; font-size: 12px; color: #222; }
svg { display: block; flex: none; }
i, em { font-style: normal; }
.sprite { position: absolute; }
.desktop { position: relative; width: 1920px; height: 1080px; overflow: hidden; display: flex; flex-direction: column; background: #efefef; }

/* Title bar */
.titlebar { height: 23px; background: #fff; display: flex; align-items: center; color: #999; padding-left: 2px; }
.titlebar-icon { margin-right: 5px; }
.titlebar-text { font-size: 12px; letter-spacing: -.05px; flex: 1; }
.titlebar-buttons { display: flex; gap: 34px; padding-right: 19px; margin-top: -3px; }

/* Ribbon */
.ribbon-tabs { height: 28px; background: #004073; display: flex; color: #fff; }
.rtab { width: 106px; text-align: center; line-height: 22px; font-size: 11.500px; font-family: "Roboto", "Noto Sans CJK KR", sans-serif; }
.rtab-active { background: #f5f5f5; color: #222; width: 103px; margin: 3px 3px 0 0; line-height: 17px; letter-spacing: .45px; padding-left: 2px; }
.rtab-block { background: #1070c0; }
.quick { margin: 3px 11px 0 auto; }
.ribbon { height: 93px; background: #f5f5f5; border-bottom: 1px solid #888; display: flex; padding-top: 6px; position: relative; font-family: "Roboto", "Noto Sans CJK KR", sans-serif; font-size: 13px; }
.group { display: flex; flex-direction: column; border-right: 1px solid #c3c3c3; background-clip: padding-box; }
.group-body { height: 70px; display: flex; }
.group-title { text-align: center; color: #666; font-size: 11.500px; line-height: 17px; letter-spacing: .55px; }
.g-board { width: 227px; }
.g-mode { width: 94px; }
.g-prepare { width: 254px; padding-left: 3px; }
.g-prepare .group-title { padding-right: 5px; }
.g-run { width: 205px; }
.g-review { width: 241px; padding-left: 3px; }
.g-review .group-title { padding-right: 5px; }
.g-deploy { width: 94px; }
.board-body { flex-direction: column; padding: 13px 3px 0; gap: 6px; }
.board-body label { padding-left: 3px; line-height: 16px; }
.select { height: 22px; border: 1px solid #777; border-radius: 4px; display: flex; align-items: center; justify-content: space-between; padding: 0 8px 0 4px; background: #f8f8f8; }
.tri { display: inline-block; width: 0; height: 0; border: 4px solid transparent; border-top: 4px solid #555; border-bottom: 0; vertical-align: middle; }
.bigbtn { flex: 1; display: flex; flex-direction: column; align-items: center; text-align: center; padding-top: 5px; line-height: 16px; white-space: nowrap; }
.bigbtn span { margin-top: 6px; }
.tall { padding-top: 4px; }
.tall span { margin-top: 3px; }
.bigbtn > .tri { margin-top: 6px; }
.bigbtn span .tri { margin-left: 4px; }
.gallery { display: flex; width: 247px; height: 68px; border: 1px solid #bbb; border-radius: 2px 5px 5px 2px; background: #fff; padding-left: 5px; }
.g-review .gallery { width: 236px; }
.gitem { width: 72px; display: flex; flex-direction: column; align-items: center; text-align: center; padding-top: 6px; line-height: 16px; white-space: nowrap; }
.g-review .gitem { width: 68px; }
.gitem-off { color: #a8a8a8; }
.gmore { margin-left: auto; width: 20px; border-left: 1px solid #bbb; background: #f5f5f5; border-radius: 0 5px 5px 0; display: flex; align-items: center; justify-content: center; }
.run-body { align-items: flex-start; padding-left: 6px; }
.run-body label { margin-top: 25px; line-height: 16px; width: 66px; white-space: nowrap; }
.run-body .bigbtn { padding-right: 1px; }
.input { width: 64px; height: 22px; margin-top: 23px; border: 1px solid #777; background: #fff; padding-left: 4px; line-height: 20px; }
.ribbon-collapse { margin: 72px 6px 0 auto; }

/* Editor */
.workspace { height: 874px; display: flex; }
.dock { width: 30px; padding: 1px; }
.dock-left { border-right: 1px solid #b5b5b5; }
.dock-right { width: 32px; border-left: 1px solid #b5b5b5; padding: 2px 2px 0 7px; }
.vtab { width: 22px; height: 98px; background: #fff; border: 1px solid #d0d0d0; writing-mode: vertical-rl; text-orientation: sideways; font: 12px "Noto Sans CJK KR", sans-serif; color: #444; display: flex; align-items: center; justify-content: center; letter-spacing: .8px; white-space: nowrap; }
.vtab-up span { transform: rotate(180deg); }
.editor { flex: 1; display: flex; flex-direction: column; }
.docbar { height: 27px; display: flex; padding: 0 5px 0 7px; position: relative; }
.nav-arrow { margin: 6px 11px 0 0; }
.nav-fwd { transform: scaleX(-1); }
.doctab { width: 51px; margin: 2px 0 0 -3px; background: #fff; border: 1px solid #d4d4d4; border-bottom: 0; text-align: center; line-height: 26px; font-size: 12px; color: #345; }
.kbd { margin: 9px 0 0 auto; margin-right: 4px; }
.editor-row { flex: 1; display: flex; }
.palette { width: 34px; display: flex; flex-direction: column; align-items: center; padding: 1px 0 0 1px; }
.palette svg { height: 28px; }
.palette-line { width: 19px; height: 1px; background: #aaa; margin: 4px 0 5px; }
.palette-gap { flex: 1; }
.editor-main { flex: 1; display: flex; flex-direction: column; margin: 0 2px 1px 0; }
.pathbar { height: 31px; border: 1px solid #80858f; box-shadow: inset 0 0 0 2px #f5f5f8; background: #fff; display: flex; align-items: center; padding: 0 5px 0 2px; font-size: 12px; }
.path-icon { background: #e8e8e8; border: 1px solid #999; margin-right: 2px; }
.path-sep { border: 5px solid transparent; border-left: 5px solid #000; border-right: 0; margin-left: 7px; }
.path-drop { margin-left: auto; border: 5px solid transparent; border-top: 6px solid #000; border-bottom: 0; }
.notice { height: 33px; margin: 1px 1px 0 1px; background: #ffffcc; border: 1px solid #808080; display: flex; padding: 0 6px; font: 13.300px/26px "Noto Sans CJK KR", sans-serif; color: #444; white-space: nowrap; letter-spacing: .52px; }
.notice > svg { margin: 6px 7px 0 0; }
.notice-link { color: #2a2ae0; text-decoration: underline; margin-left: 5px; width: 70px; text-underline-offset: 3px; }
.notice-link2 { color: #4a4ae0; margin-left: 4px; }
.notice-x { margin: 2px 0 0 auto; width: 21px; height: 19px; border: 1px solid #999; background: #e4e4e4; display: flex; align-items: center; justify-content: center; }
.canvas { flex: 1; background: #fff; border: 1px solid #80858f; border-top: 0; display: flex; align-items: flex-end; justify-content: flex-end; }
.canvas-marks { display: flex; gap: 1px; padding: 2px; }
.canvas-marks i { width: 4px; height: 10px; background: #efefef; }
.canvas-marks .wide { width: 10px; }

.statusbar { height: 22px; display: grid; grid-template-columns: 954px 464px 300px 188px; align-items: center; padding: 3px 7px 0; font-size: 12px; line-height: 18px; }
.s-warn { color: #2a1fa8; letter-spacing: .75px; }
.s-solver { color: #2a1f98; text-align: right; font-size: 11.700px; }
.s-zoom { font-size: 11.500px; }

/* Taskbar */
.taskbar { height: 40px; background: linear-gradient(90deg, #1f3741, #1e3440 60%, #1a2a40 82%, #1b2745); display: flex; color: #fff; }
.start { width: 48px; display: flex; align-items: center; justify-content: center; }
.search { width: 344px; background: #f2f2f2; border: 1px solid #bbb; display: flex; align-items: center; color: #333; }
.search-icon { margin: 0 11px; }
.search span { font-size: 15.500px; letter-spacing: .7px; white-space: nowrap; width: 229px; margin-top: -2px; }
.scene { margin-top: 4px; }
.tasks { display: flex; }
.task { width: 49.100px; display: flex; align-items: center; justify-content: center; }
.t-cort { padding-right: 2px; }
.t-view { padding-right: 5px; }
.run { background: linear-gradient(#76b9ed, #76b9ed) center bottom / 40px 2px no-repeat; }
.multi { background: linear-gradient(90deg, #76b9ed 31px, transparent 31px, transparent 32px, #4f85ad 32px) center bottom / 40px 2px no-repeat; }
.active { background-color: #4b5d66; background-size: 100% 2px; }
.tray { margin-left: auto; display: flex; align-items: center; font-size: 14px; }
.weather { margin: 0 16px 0 8px; width: 66px; white-space: nowrap; }
.t-meet { margin-left: 11px; }
.t-net { margin-left: 9px; }
.t-vol { margin-left: 7px; }
.t-lang { font-size: 18px; margin-left: 10px; width: 15px; }
.clock { font-size: 12px; line-height: 18px; text-align: center; width: 74px; margin-left: 6px; margin-top: -1px; white-space: nowrap; }
.notif { position: relative; margin-left: 14px; width: 36px; }
.notif b { position: absolute; left: 8px; top: 7px; width: 17px; height: 17px; border: 1px solid #999; border-radius: 50%; background: #333c46; font-size: 11px; line-height: 15px; text-align: center; }
.peek { width: 1px; height: 40px; background: #6d7686; margin-right: 4px; }

/* Floating windows and the diagram blocks behind them */
.blocks { position: absolute; left: 680px; top: 240px; }
.window { position: absolute; display: flex; flex-direction: column; background: #fff; }
.scope { border: 1px solid #a5a5a5; box-shadow: 0 4px 14px rgba(0, 0, 0, .32); font-family: "Noto Sans CJK KR", sans-serif; }
.scope2 { left: 191px; top: 345px; width: 511px; height: 405px; }
.scope1 { left: 1075px; top: 239px; width: 703px; height: 547px; }
.w-title { height: 29px; display: flex; align-items: center; padding: 0 17px 0 8px; color: #999; font: 12px "Open Sans", sans-serif; }
.w-title > span { margin-left: 5px; }
.w-buttons { display: flex; gap: 34px; margin-left: auto; }
.w-menu { height: 27px; display: flex; align-items: center; padding-left: 8px; color: #000; border-bottom: 1px solid #a0a0a0; font-size: 12px; white-space: nowrap; }
.w-menu span { letter-spacing: 0; }
.w-menu span:nth-child(1) { width: 55px; }
.w-menu span:nth-child(2) { width: 43px; }
.w-menu span:nth-child(3) { width: 57px; }
.w-menu span:nth-child(4) { width: 87px; }
.w-menu span:nth-child(5) { letter-spacing: .2px; }
.w-menu svg { margin: 0 5px 0 auto; }
.w-tools { height: 28px; background: #f0f0f0; border-bottom: 1px solid #a0a0a0; display: flex; align-items: center; padding: 1px 0; }
.w-tools b { width: 23px; height: 22px; display: flex; align-items: center; justify-content: center; }
.w-tools .w24 { width: 24px; }
.w-tools .on { background: #c0dcf3; border: 1px solid #90c8f6; }
.w-tools em { width: 5px; height: 3px; margin: 0 2.500px; border: solid transparent; border-width: 3px 2.500px 0; border-top-color: #333; }
.w-tools i { width: 1px; height: 22px; margin: 0 4px; background: #a0a0a0; }
.w-tools .w8 { margin: 0 3px 0 4px; }
.w-plot { flex: 1; display: flex; background: #262626; margin-top: 1px; overflow: hidden; }
.axis { font: 11px "Liberation Sans", sans-serif; fill: #afafaf; }
.cursor { font: 12px "Liberation Sans", sans-serif; fill: #fff; text-anchor: middle; }
.w-status { height: 23px; border-top: 1px solid #c8c8c8; background: #f0f0f0; display: flex; align-items: center; padding: 0 2px 0 1px; gap: 2px; color: #000; font-size: 12px; white-space: nowrap; }
.ready { flex: 1; margin-top: -1px; }
.cell { height: 19px; line-height: 16px; padding-left: 3px; border: 1px solid; border-color: #a8a8a8 #fff #fff #a8a8a8; font-family: "Liberation Sans", "Noto Sans CJK KR", sans-serif; overflow: hidden; }
.c1 { width: 55px; letter-spacing: -.3px; }
.c2 { width: 59px; letter-spacing: -.3px; }
.c3 { width: 52px; font-size: 11.500px; letter-spacing: -.2px; padding-left: 2px; }
.scope1 .c2 { width: 74px; }

/* Cursor measurements */
.measure { width: 260px; height: 219px; border: 1px solid #888; background: #000; color: #afafaf; font: 14px "Liberation Sans", "Noto Sans CJK KR", sans-serif; }
.m-head { height: 20px; background: #262626; color: #fff; display: flex; align-items: center; padding: 0 0 3px 5px; }
.m-head .down { margin: 0 6px 0 3px; border-top-color: #fff; }
.m-head b { font-weight: 500; }
.m-x { margin: 0 5px 0 auto; }
.down { border: 4px solid transparent; border-top: 7px solid #afafaf; border-bottom: 0; }
.right { border: 4px solid transparent; border-left: 7px solid #afafaf; border-right: 0; }
.m-row { height: 21px; display: flex; align-items: center; gap: 5px; padding: 0 0 2px 5px; font-size: 13.500px; }
.m-box { margin: 1px 4px 0; height: 151px; border: 1px solid #888; display: grid; grid-template-columns: 24px 99px 24px 1fr; grid-template-rows: 21px 21px 21px 21px 17px 43px; line-height: 21px; text-align: center; white-space: nowrap; }
.m-box > span:nth-child(4n) { padding-right: 6px; }
.m-box > span:nth-child(4n+1) { padding-left: 5px; }
.m-box .field { background: #ececec; color: #111; border: 1px solid #aab; line-height: 18px; }
.m-box hr { grid-column: 1 / -1; width: 225px; height: 1px; border: 0; background: #afafaf; margin: 12px auto 0; }
.m-sum { grid-column: 1 / -1; display: grid; grid-template-columns: 128px 1fr; grid-auto-rows: 21px; line-height: 21px; }
.m-sum span:nth-child(even) { padding-right: 6px; }

/* Calculator */
.calc { left: 726px; top: 217px; width: 334px; height: 589px; border: 1px solid #777; background: linear-gradient(#f3f3e6, #f1f1ee 9%, #ededed 40%, #f2f2f2); box-shadow: 0 6px 24px rgba(0, 0, 0, .42); color: #000; }
.c-title { height: 32px; display: flex; align-items: center; padding: 0 17px 0 12px; font-size: 12px; }
.c-mode { height: 40px; display: flex; align-items: center; padding: 0 11px 0 12px; }
.c-mode b { font: 700 20.500px "Noto Sans CJK KR", sans-serif; letter-spacing: 1.200px; margin-left: 19px; margin-top: -4px; }
.c-hist { margin-left: auto; }
.c-expr { height: 30px; padding-right: 19px; text-align: right; color: #666; font-size: 13.300px; line-height: 32px; }
.c-result { height: 58px; text-align: right; padding-right: 13px; font-size: 46px; font-weight: 700; line-height: 55px; letter-spacing: 0; }
.c-row6 { display: grid; grid-template-columns: repeat(6, 54.200px); padding-left: 3px; text-align: center; font-size: 12px; font-weight: 600; }
.c-deg { margin-top: 23px; line-height: 38px; }
.c-mem { line-height: 38px; }
.off { color: #bbb; }
.c-func { height: 37px; display: flex; align-items: center; padding-left: 14px; font-size: 12.500px; }
.c-func span { margin-left: 9px; }
.chev { margin: 2px 0 0 9px; }
.fx { font: italic 18px "Liberation Serif", serif; margin: 0 5px 0 26px; }
.keys { height: 287px; margin: 0 4px; display: grid; grid-template-columns: repeat(5, 1fr); grid-template-rows: repeat(7, 1fr); gap: 2px; }
.keys > span { background: #f8f8f8; display: flex; align-items: center; justify-content: center; font-size: 13.700px; color: #111; padding-top: 2px; }
.keys > .num { background: #fdfdfd; font-size: 17px; font-weight: 700; color: #000; padding-top: 3px; }
.keys > .pm { padding-top: 0; }
.keys > .eq { background: #91c1e7; }
.keys i { font: italic 16px "Liberation Serif", serif; }
.keys sup { font-size: 10px; line-height: 9px; margin-bottom: 9px; vertical-align: 6px; }
.keys .nd { font-size: 8px; }
.keys .sq { margin-left: 1px; font-size: 11px; }
.keys .pow { font-size: 12px; }
.keys sup i { font-size: 12px; }
.keys .ten { letter-spacing: -.6px; }
.keys .one, .keys .root { margin-right: -2px; }
.keys .over { border-top: 1px solid #222; line-height: 12px; }
```
